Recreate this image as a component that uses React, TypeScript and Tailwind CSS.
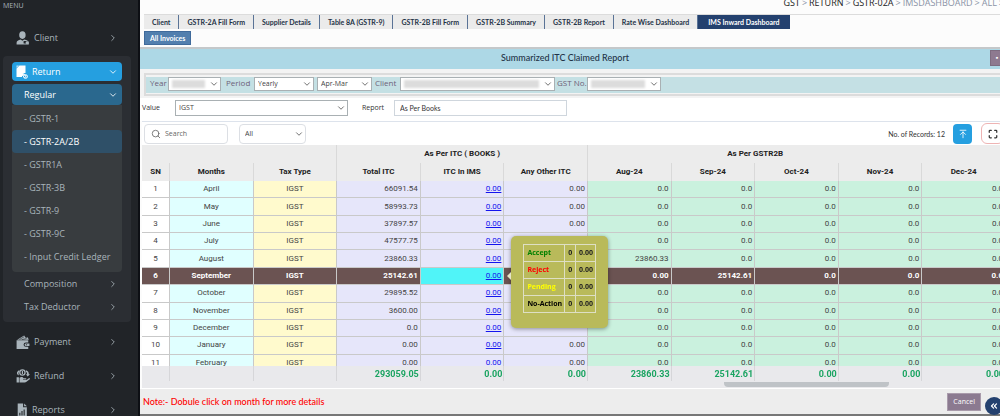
import React from "react";
import clsx from "clsx";
import {
  ArrowUpToLine,
  ChevronDown,
  ChevronRight,
  ChevronsLeft,
  Maximize,
  Search,
} from "lucide-react";

const returnLinks = [
  "GSTR-1",
  "GSTR-2A/2B",
  "GSTR1A",
  "GSTR-3B",
  "GSTR-9",
  "GSTR-9C",
  "Input Credit Ledger",
];

const tabs = [
  "Client",
  "GSTR-2A Fill Form",
  "Supplier Details",
  "Table 8A (GSTR-9)",
  "GSTR-2B Fill Form",
  "GSTR-2B Summary",
  "GSTR-2B Report",
  "Rate Wise Dashboard",
  "IMS Inward Dashboard",
];

const columns = [
  "SN",
  "Months",
  "Tax Type",
  "Total ITC",
  "ITC In IMS",
  "Any Other ITC",
  "Aug-24",
  "Sep-24",
  "Oct-24",
  "Nov-24",
  "Dec-24",
];

const totals = ["293059.05", "0.00", "0.00", "23860.33", "25142.61", "0.00", "0.00", "0.00"];

interface MonthRow {
  month: string;
  total: string;
  other: string;
  gstr2b: string[];
}

const none = ["0.0", "0.0", "0.0", "0.0", "0.0"];

const rows: MonthRow[] = [
  { month: "April", total: "66091.54", other: "0.00", gstr2b: none },
  { month: "May", total: "58993.73", other: "0.00", gstr2b: none },
  { month: "June", total: "37897.57", other: "0.00", gstr2b: none },
  { month: "July", total: "47577.75", other: "", gstr2b: none },
  { month: "August", total: "23860.33", other: "", gstr2b: ["23860.33", "0.0", "0.0", "0.0", "0.0"] },
  { month: "September", total: "25142.61", other: "", gstr2b: ["0.00", "25142.61", "0.0", "0.0", "0.0"] },
  { month: "October", total: "29895.52", other: "", gstr2b: none },
  { month: "November", total: "3600.00", other: "", gstr2b: none },
  { month: "December", total: "0.0", other: "", gstr2b: none },
  { month: "January", total: "0.00", other: "0.00", gstr2b: none },
  { month: "February", total: "0.00", other: "0.00", gstr2b: none },
];

const actions = [
  { label: "Accept", color: "text-[#008000]" },
  { label: "Reject", color: "text-[#ff0000]" },
  { label: "Pending", color: "text-[#ffff00]" },
  { label: "No-Action", color: "text-black" },
];

function ClientIcon() {
  return (
    <svg viewBox="0 0 24 24" className="size-3.5" fill="currentColor">
      <ellipse cx="11" cy="7" rx="5.5" ry="6.5" />
      <path d="M1 23v-3c0-3 3-4 7-5.500l3 2 3-2c5 1.500 8 2.500 8 5.500v3z" />
      <rect x="13" y="17" width="7" height="4.500" rx="1" fill="#212428" />
      <circle cx="19" cy="20" r="2.500" />
    </svg>
  );
}

function ReturnIcon() {
  return (
    <svg viewBox="0 0 24 28" className="h-3.5 w-3" fill="currentColor">
      <path d="M7 1h12v15c-5 0-8 3-7 8H1V7z" />
      <path d="M1 6V1h5z" opacity=".7" />
      <path d="M13 20a4 3 0 1 1 4 5M15 17l-3 3 4 3" fill="none" stroke="currentColor" strokeWidth="2" />
      <ellipse cx="19" cy="23" rx="4" ry="3.500" fill="none" stroke="currentColor" strokeWidth="2" />
    </svg>
  );
}

function PaymentIcon() {
  return (
    <svg viewBox="0 0 24 24" className="size-3.5" fill="currentColor">
      <path d="M2 8 14 1l3 4 3-1 2 4z" />
      <path d="M6 7.500 14 3M10 8l8-2" stroke="#212428" strokeWidth="1" />
      <path d="M1 9h20v4h-4a4 3.500 0 0 0 0 7h4v4H1z" />
      <path d="M17 14.500h6v4.500h-6a2.200 2.200 0 0 1 0-4.500z" />
      <circle cx="18" cy="16.700" r="1" fill="#212428" />
    </svg>
  );
}

function RefundIcon() {
  return (
    <svg viewBox="0 0 24 24" className="size-3.5" fill="currentColor">
      <circle cx="11" cy="6" r="4.500" fill="none" stroke="currentColor" strokeWidth="2.200" />
      <path d="M10 3.500h2v5h-2z" />
      <path d="M17 2c4 1 5 4 5 7l2 0-4 4-3-4h2c0-3-1-4-2-4z" />
      <path d="M5 2C2 4 1 6 2 9l3 2C4 8 4 6 6 4z" />
      <path d="M1 14h4v9H1zM6 15c3-2 6-1 7 1h4c1 0 1 2 0 2h-5v1h6l4-3c2-1 3 1 1 2l-5 4c-1 1-2 1-3 1H6z" />
    </svg>
  );
}

function ReportsIcon() {
  return (
    <svg viewBox="0 0 20 26" className="h-3.5 w-3" fill="currentColor">
      <path d="M2 1h10v7h7v17H2z" />
      <path d="M14 1l5 5h-5z" />
      <path d="M5 18h2v5H5zM9 15h2v8H9zM13 12h2v11h-2z" fill="#212428" />
    </svg>
  );
}

function MenuItem({ icon, label }: { icon: React.ReactNode; label: string }) {
  return (
    <a href="#" className="flex h-[34px] items-center gap-1 pl-4 pr-5">
      {icon}
      <span className="flex-1">{label}</span>
      <ChevronRight className="size-2.5" />
    </a>
  );
}

function Sidebar() {
  return (
    <nav className="w-[140px] shrink-0 overflow-hidden border-r-2 border-[#0d0f14] bg-[#212428] font-['Open_Sans',sans-serif] text-[9px] leading-3 text-[#a9b4bb]">
      <div className="px-[3px] text-[7px]">MENU</div>
      <div className="pb-px pt-[9px]">
        <MenuItem icon={<ClientIcon />} label="Client" />
      </div>
      <div className="ml-[3px] mr-[7px] rounded-sm bg-[#2b2e33] px-[9px] pb-1 pt-1.5">
        <button className="flex h-[19px] w-full items-center gap-1 rounded-sm bg-[#259fe0] px-1 text-left font-medium text-white">
          <ReturnIcon />
          <span className="flex-1">Return</span>
          <ChevronDown className="size-2.5" />
        </button>
        <button className="mt-[3px] flex h-[21px] w-full items-center rounded-sm bg-[#2a688e] pl-3 pr-1 text-left font-medium text-white">
          <span className="flex-1">Regular</span>
          <ChevronDown className="size-2.5" />
        </button>
        <ul className="rounded-b-sm bg-[#383c3f] pb-1 pt-0.5">
          {returnLinks.map(link => (
            <li key={link}>
              <a
                href="#"
                className={clsx(
                  "flex h-[23px] items-center whitespace-nowrap rounded-sm pl-3",
                  link === "GSTR-2A/2B" && "bg-[#2f5068] font-medium text-white",
                )}
              >
                - {link}
              </a>
            </li>
          ))}
        </ul>
        {["Composition", "Tax Deductor"].map(label => (
          <a key={label} href="#" className="flex h-[23px] items-center pl-3 pr-1">
            <span className="flex-1">{label}</span>
            <ChevronRight className="size-2.5" />
          </a>
        ))}
      </div>
      <div className="-mb-1 pt-[3px]">
        <MenuItem icon={<PaymentIcon />} label="Payment" />
        <MenuItem icon={<RefundIcon />} label="Refund" />
        <MenuItem icon={<ReportsIcon />} label="Reports" />
      </div>
    </nav>
  );
}

interface SelectProps {
  label: string;
  value?: string;
  className: string;
  boxClass?: string;
}

// Without a value the box shows a redacted smudge instead of text.
function Select({ label, value, className, boxClass = "border border-[#a9b0b3]" }: SelectProps) {
  return (
    <span className={clsx("relative block", className)}>
      <select
        aria-label={label}
        className={clsx("block size-full appearance-none bg-white pl-[3px] text-[#444]", boxClass)}
      >
        {value && <option>{value}</option>}
      </select>
      {!value && (
        <span className="absolute inset-y-[3px] left-1 right-4 bg-[#dcdcdc] blur-[1px]" />
      )}
      <ChevronDown className="pointer-events-none absolute right-0.5 top-1/2 size-2.5 -translate-y-1/2 text-[#555]" />
    </span>
  );
}

function ActionPopup() {
  return (
    <div className="absolute -top-8 left-full z-10 ml-2 w-[97px] rounded-[5px] bg-[#b9ba5a] px-3 pb-[15px] pt-2 shadow-[0_1px_4px_rgba(0,0,0,0.4)]">
      <span className="absolute -left-1 top-9 border-y-4 border-r-4 border-y-transparent border-r-[#e4e4c8]" />
      <table className="w-full border-collapse font-['Open_Sans',sans-serif] text-[7px] font-bold leading-3 text-[#222]">
        <tbody>
          {actions.map(action => (
            <tr key={action.label} className="h-[17px]">
              <th className={clsx("border border-[#dedfc4] pl-[3px] text-left", action.color)}>
                {action.label}
              </th>
              <td className="border border-[#dedfc4] px-[3px] text-center">0</td>
              <td className="border border-[#dedfc4] px-0.5 text-center">0.00</td>
            </tr>
          ))}
        </tbody>
      </table>
    </div>
  );
}

function ItcTable() {
  return (
    <div className="h-[236px] overflow-hidden bg-[#e9e9ec]">
      <table className="h-[242px] w-full min-w-[864px] table-fixed border-separate border-spacing-0 font-[Roboto,sans-serif] text-[8px] leading-3 text-[#444]">
        <colgroup>
          <col className="w-7" />
          <col span={10} />
        </colgroup>
        <thead className="bg-[#ececec] text-[#222]">
          <tr className="h-[18px]">
            <th colSpan={3} className="border-r border-[#d9d9d9]" />
            <th colSpan={3} className="border-r border-[#d9d9d9]">As Per ITC ( BOOKS )</th>
            <th colSpan={4}>As Per GSTR2B</th>
            <th />
          </tr>
          <tr className="h-[18px]">
            {columns.map(column => (
              <th key={column} className="border-r border-[#d9d9d9]">
                {column}
              </th>
            ))}
          </tr>
        </thead>
        <tbody>
          {rows.map((row, i) => {
            const selected = row.month === "September";
            const cell = "border-b border-r border-[#c9c9c9]";
            return (
              <tr
                key={row.month}
                className={clsx("h-[17px]", selected && "bg-[#6b5352] font-bold text-white")}
              >
                <td className={clsx(cell, "text-center", !selected && "bg-white")}>{i + 1}</td>
                <td className={clsx(cell, "text-center", !selected && "bg-[#e0ffff]")}>{row.month}</td>
                <td className={clsx(cell, "text-center", !selected && "bg-[#fffacd]")}>IGST</td>
                <td className={clsx(cell, "pr-0.5 text-right", !selected && "bg-[#e6e6fa]")}>{row.total}</td>
                <td
                  className={clsx(
                    cell,
                    "relative pr-0.5 text-right font-normal",
                    selected ? "bg-[#50f4f8]" : "bg-[#e6e6fa]",
                  )}
                >
                  <a href="#" className="text-[#1414ee] underline">0.00</a>
                  {selected && <ActionPopup />}
                </td>
                <td className={clsx(cell, "pr-0.5 text-right", !selected && "bg-[#e6e6fa]")}>{row.other}</td>
                {row.gstr2b.map((amount, n) => (
                  <td key={n} className={clsx(cell, "pr-0.5 text-right", !selected && "bg-[#caf1de]")}>
                    {amount}
                  </td>
                ))}
              </tr>
            );
          })}
        </tbody>
        <tfoot className="sticky bottom-0 bg-[#e9e9ec] text-[#1ba462]">
          <tr className="h-[15px]">
            {["", "", ""].map((blank, n) => (
              <td key={n} className="border-r border-[#d6d6d9]">{blank}</td>
            ))}
            {totals.map((total, n) => (
              <td key={n} className="border-r border-[#d6d6d9] pr-px text-right text-[9px] font-bold">
                {total}
              </td>
            ))}
          </tr>
        </tfoot>
      </table>
    </div>
  );
}

export default function App() {
  return (
    <div className="flex overflow-hidden bg-white">
      <Sidebar />
      <main className="min-w-0 flex-1 overflow-hidden bg-[#fcfcfc] font-['Open_Sans',sans-serif] text-[8px] leading-3 text-[#333]">
        <div className="-mr-1 flex h-3.5 items-start justify-end gap-0.5 overflow-hidden whitespace-nowrap text-[9px] leading-[6px] text-[#222]">
          <a href="#">GST</a>
          <span className="text-[#8a93a6]">&gt;</span>
          <a href="#">RETURN</a>
          <span className="text-[#8a93a6]">&gt;</span>
          <a href="#">GSTR-02A</a>
          <span className="text-[#8a93a6]">&gt;</span>
          <span className="text-[#8a93a6]">IMSDASHBOARD</span>
          <span className="text-[#8a93a6]">&gt;</span>
          <span className="text-[#8a93a6]">ALL</span>
          <span className="text-[#8a93a6]">&gt;</span>
        </div>

        <div className="ml-1 flex h-[15px] border-t border-[#dcdcdc] font-[Lato,sans-serif] font-bold text-[#1f3347]">
          {tabs.map((tab, i) => (
            <button
              key={tab}
              className={clsx(
                "whitespace-nowrap text-[7px]",
                i === tabs.length - 1
                  ? "bg-[#24416f] px-2.5 text-white"
                  : "border-r border-[#5a7396] bg-[#ebebeb] px-2",
              )}
            >
              {tab}
            </button>
          ))}
        </div>
        <button className="ml-1 mt-0.5 block h-3.5 border border-[#3f6a9b] bg-[#527fae] px-[5px] font-[Lato,sans-serif] text-[7px] font-bold leading-3 text-white">
          All Invoices
        </button>

        <div className="mt-0.5 flex h-[22px] items-center border-t-2 border-[#c4c8ca] bg-[#add8e6] pb-0.5 text-[#1f3347]">
          <h1 className="flex-1 text-center font-[Lato,sans-serif] text-[9px] font-medium">
            Summarized ITC Claimed Report
          </h1>
          <button aria-label="Close" className="-mr-1 flex h-4 w-3.5 items-center justify-center border border-[#7d6c80] bg-[#8e7a90] text-[7px] text-white">
            ▪
          </button>
        </div>

        <div className="bg-[#f3f3f3] pb-0.5 pl-1 pt-1">
          <div className="border-y-2 border-l-2 border-[#dcdcdc] pb-px pt-0.5">
            <div className="flex h-4 items-start bg-[#c4e0e4] pl-1 text-[7px] text-[#6d6078]">
              <span className="w-[18px] text-[8px] font-medium">Year</span>
              <Select label="Year" className="h-3.5 w-[53px]" />
              <span className="w-[33px] pl-[5px] text-[8px] font-medium">Period</span>
              <Select label="Period" value="Yearly" className="h-3.5 w-[60px]" />
              <Select label="Months" value="Apr-Mar" className="ml-[3px] h-3.5 w-[55px]" />
              <span className="w-7 pl-[3px] text-[8px] font-medium">Client</span>
              <Select label="Client" className="h-3.5 w-[155px]" />
              <span className="w-8 whitespace-nowrap pl-0.5 text-[8px] font-medium">GST No.</span>
              <Select label="GST No." className="h-3.5 w-[74px]" />
            </div>
          </div>
        </div>

        <div className="flex items-center bg-white pb-[5px] pt-0.5 text-[7px]">
          <span className="w-[35px] pl-0.5">Value</span>
          <Select label="Value" value="IGST" className="h-4 w-[173px]" />
          <label htmlFor="report" className="w-[46px] pl-3.5">Report</label>
          <input
            id="report"
            defaultValue="As Per Books"
            className="h-4 w-[173px] border border-[#cfd6dd] bg-white px-[5px] font-[Lato,sans-serif] text-[#333]"
          />
        </div>

        <section className="ml-0.5 border-t border-[#dde3ec] bg-white">
          <div className="flex h-[23px] items-center pl-0.5 text-[7px]">
            <label className="flex h-5 w-[84px] items-center gap-1 rounded-[4px] border border-[#dcdfe4] pl-1.5 text-[#666]">
              <Search className="size-2.5 shrink-0" />
              <input
                placeholder="Search"
                aria-label="Search"
                className="w-full min-w-0 bg-transparent placeholder:text-[#666]"
              />
            </label>
            <Select
              label="Filter"
              value="All"
              className="ml-[11px] h-5 w-[67px]"
              boxClass="rounded-[4px] border border-[#dcdfe4] pl-[5px]"
            />
            <span className="ml-auto mr-2 font-[Lato,sans-serif]">No. of Records: 12</span>
            <button aria-label="Scroll to top" className="flex h-5 w-[19px] items-center justify-center rounded-[4px] bg-[#259fe0] text-white">
              <ArrowUpToLine className="size-2.5" />
            </button>
            <button aria-label="Full screen" className="-mr-1 ml-[9px] flex h-[21px] w-[23px] items-center justify-center rounded-[6px] border border-[#eeb4b4] text-[#333]">
              <Maximize className="size-2.5" strokeWidth={3} />
            </button>
          </div>
          <ItcTable />
          <div className="flex h-[7px] justify-end bg-[#e9e9ec]">
            <span className="mr-[111px] mt-px h-[5px] w-[165px] rounded-b-[4px] bg-[#bfc3c7]" />
          </div>
        </section>

        <footer className="flex h-7 items-center border-b-2 border-t border-b-[#777] border-t-white bg-[#ededed] pl-[3px]">
          <p className="flex-1 font-[Lato,sans-serif] text-[9px] font-medium text-[#ff0000]">
            Note:- Dobule click on month for more details
          </p>
          <button className="h-[18px] border border-[#a99bab] bg-[#8b7a90] px-[5px] text-[7px] font-medium text-white">
            Cancel
          </button>
          <button aria-label="Collapse" className="-mr-[3px] ml-1 mt-2 flex size-[18px] items-center justify-center rounded-full bg-[#24416f] text-white">
            <ChevronsLeft className="size-2.5" strokeWidth={3} />
          </button>
        </footer>
      </main>
    </div>
  );
}
